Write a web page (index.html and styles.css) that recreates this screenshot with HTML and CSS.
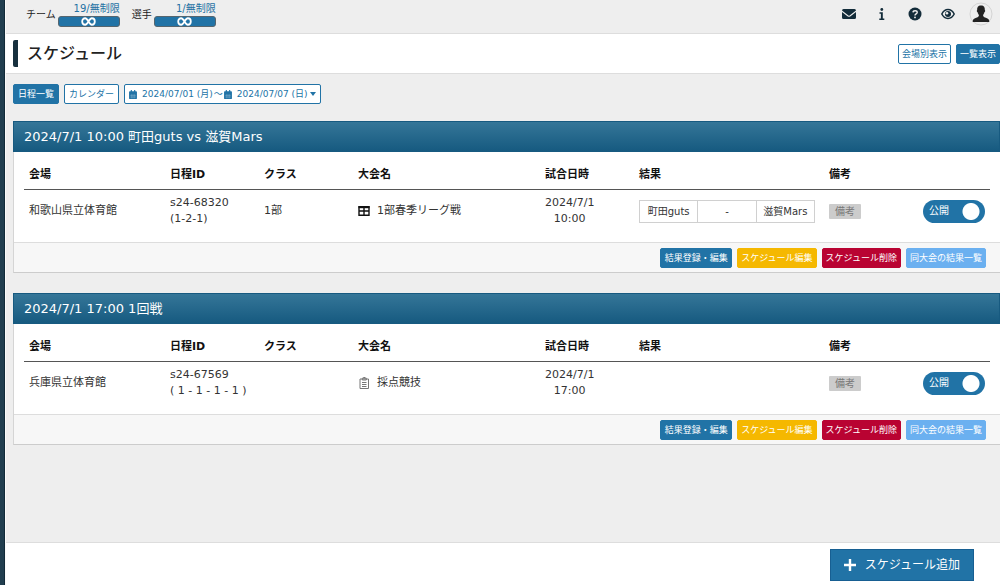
FILE: index.html
```html
<!DOCTYPE html>
<html lang="ja">
<head>
<meta charset="utf-8">
<meta name="viewport" content="width=device-width, initial-scale=1">
<title>スケジュール</title>
<link rel="stylesheet" href="styles.css">
</head>
<body>
<svg class="defs" aria-hidden="true">
  <symbol id="calendar" viewBox="0 0 14 16"><path d="M0 6h14v8.500a1.500 1.500 0 0 1-1.500 1.500h-11A1.500 1.500 0 0 1 0 14.500zM0 6.500V3.500A1.500 1.500 0 0 1 1.500 2H3V0h2v2h4V0h2v2h1.500A1.500 1.500 0 0 1 14 3.500V6.500z"/><path class="cal-grid" d="M2 9.500h10M2 12.500h10M5 7v8M9 7v8"/></symbol>
  <symbol id="infinity" viewBox="0 0 16 10"><path d="M8 5C6.600 2.600 5.700 1.400 4.300 1.400a3.300 3.600 0 0 0 0 7.200C5.700 8.600 6.600 7.400 8 5s2.300-3.600 3.700-3.600a3.300 3.600 0 0 1 0 7.200C10.300 8.600 9.400 7.400 8 5z" fill="none" stroke="#fff" stroke-width="2"/></symbol>
</svg>
<div class="app">
  <aside class="rail"></aside>
  <div class="page">
    <header class="topbar">
      <div class="quotas">
        <div class="quota"><span class="quota-name">チーム</span><div class="quota-meter"><a href="#">19/無制限</a><span class="meter"><svg><use href="#infinity"/></svg></span></div></div>
        <div class="quota"><span class="quota-name">選手</span><div class="quota-meter"><a href="#">1/無制限</a><span class="meter"><svg><use href="#infinity"/></svg></span></div></div>
      </div>
      <nav class="tools">
        <button type="button" aria-label="メール"><svg viewBox="0 0 14 14"><path d="M1.500 2h11A1.500 1.500 0 0 1 14 3.500L7.600 8.400a1 1 0 0 1-1.200 0L0 3.500A1.500 1.500 0 0 1 1.500 2zM0 5l5.800 4.400a2 2 0 0 0 2.400 0L14 5v5.500A1.500 1.500 0 0 1 12.500 12h-11A1.500 1.500 0 0 1 0 10.500z"/></svg></button>
        <button type="button" aria-label="お知らせ"><svg viewBox="0 0 14 14"><circle cx="6.800" cy="2.500" r="1.400"/><path d="M4.500 5.300h3.300v6.200h1.500V13H4.300v-1.500h1.600V6.700H4.500z"/></svg></button>
        <button type="button" aria-label="ヘルプ"><svg viewBox="0 0 14 14"><circle cx="7" cy="7" r="6.500"/><path d="M5 5.400c.1-2.200 4.200-2.200 4.200 0C9.200 6.900 7 6.800 7 8.400" fill="none" stroke="#eee" stroke-width="1.400"/><circle cx="7" cy="10.400" r=".9" fill="#eee"/></svg></button>
        <button type="button" aria-label="表示"><svg viewBox="0 0 14 14"><path d="M.8 7C3.800 1 10.200 1 13.200 7 10.200 13 3.800 13 .8 7z" fill="none" stroke="currentColor" stroke-width="1.500"/><circle cx="7" cy="7" r="3"/><circle cx="6" cy="6.200" r="1.300" fill="#eee"/></svg></button>
        <button type="button" aria-label="アカウント" class="avatar"><svg viewBox="0 0 24 24"><circle cx="12" cy="12" r="11" fill="#eee" stroke="#d4d4d4"/><path fill="#222" d="M12 3.500c3 0 4 2 3.800 4.500.7.300.4 2-.4 2.300-.3 1.400-.9 2-1.300 2.700 0 1.500.3 1.900 2.700 2.700 2.600.8 3.500 1.600 3.500 4.300H3.700c0-2.700.9-3.500 3.500-4.300 2.400-.8 2.700-1.200 2.700-2.700-.4-.7-1-1.300-1.300-2.700-.8-.3-1.100-2-.4-2.300C8 5.500 9 3.500 12 3.500z"/></svg></button>
      </nav>
    </header>
    <div class="titlebar">
      <h1>スケジュール</h1>
      <div class="views">
        <button type="button" class="btn outline">会場別表示</button>
        <button type="button" class="btn primary">一覧表示</button>
      </div>
    </div>
    <main>
      <div class="filters">
        <button type="button" class="btn primary">日程一覧</button>
        <button type="button" class="btn outline">カレンダー</button>
        <button type="button" class="btn outline range"><svg><use href="#calendar"/></svg><span>2024/07/01 (月)</span><span class="tilde">～</span><svg><use href="#calendar"/></svg><span>2024/07/07 (日)</span><i class="caret"></i></button>
      </div>
      <section class="card">
        <h2>2024/7/1 10:00 町田guts vs 滋賀Mars</h2>
        <div class="card-body">
          <table class="schedule">
            <colgroup><col class="venue"><col class="code"><col class="class"><col class="event"><col class="when"><col class="result"><col class="note"></colgroup>
            <thead><tr><th>会場</th><th>日程ID</th><th>クラス</th><th>大会名</th><th>試合日時</th><th>結果</th><th>備考</th></tr></thead>
            <tbody><tr>
              <td>和歌山県立体育館</td>
              <td>s24-68320<br>(1-2-1)</td>
              <td>1部</td>
              <td><span class="event-name"><svg viewBox="0 0 12 12"><path d="M1 1.800h10v8.400H1zM1 6h10M6 2v8" fill="none" stroke="#111" stroke-width="1.400"/><path d="M.5 1.200h11v2H.5z"/></svg>1部春季リーグ戦</span></td>
              <td><span class="datetime">2024/7/1<br>10:00</span></td>
              <td><div class="score"><span>町田guts</span><span>-</span><span>滋賀Mars</span></div></td>
              <td><div class="note-cell"><span class="badge">備考</span><label class="switch"><input type="checkbox" role="switch" checked><span>公開</span></label></div></td>
            </tr></tbody>
          </table>
        </div>
        <footer class="actions">
          <button type="button" class="btn primary">結果登録・編集</button>
          <button type="button" class="btn warning">スケジュール編集</button>
          <button type="button" class="btn danger">スケジュール削除</button>
          <button type="button" class="btn info">同大会の結果一覧</button>
        </footer>
      </section>
      <section class="card">
        <h2>2024/7/1 17:00 1回戦</h2>
        <div class="card-body">
          <table class="schedule">
            <colgroup><col class="venue"><col class="code"><col class="class"><col class="event"><col class="when"><col class="result"><col class="note"></colgroup>
            <thead><tr><th>会場</th><th>日程ID</th><th>クラス</th><th>大会名</th><th>試合日時</th><th>結果</th><th>備考</th></tr></thead>
            <tbody><tr>
              <td>兵庫県立体育館</td>
              <td>s24-67569<br>( 1 - 1 - 1 - 1 )</td>
              <td></td>
              <td><span class="event-name"><svg viewBox="0 0 12 12"><path d="M2 2h8.500v9.500H2zM4.300 1.200h4v1.800h-4zM4 5.500h4.500M4 7.500h4.500M4 9.500h4.500" fill="none" stroke="#777"/><path d="M5.300 0h2v1h-2z" fill="#777"/></svg>採点競技</span></td>
              <td><span class="datetime">2024/7/1<br>17:00</span></td>
              <td></td>
              <td><div class="note-cell"><span class="badge">備考</span><label class="switch"><input type="checkbox" role="switch" checked><span>公開</span></label></div></td>
            </tr></tbody>
          </table>
        </div>
        <footer class="actions">
          <button type="button" class="btn primary">結果登録・編集</button>
          <button type="button" class="btn warning">スケジュール編集</button>
          <button type="button" class="btn danger">スケジュール削除</button>
          <button type="button" class="btn info">同大会の結果一覧</button>
        </footer>
      </section>
    </main>
    <footer class="bottombar">
      <button type="button" class="add"><svg viewBox="0 0 10 10"><path d="M5 0v10M0 5h10" stroke="#fff" stroke-width="2"/></svg>スケジュール追加</button>
    </footer>
  </div>
</div>
</body>
</html>
```

FILE: styles.css
```css
* { box-sizing: border-box; }
body {
  margin: 0;
  background: #eee;
  color: #333;
  font: 11px/16px "DejaVu Sans", "Noto Sans CJK JP", sans-serif;
}
button { font: inherit; color: inherit; margin: 0; padding: 0; border: 0; background: none; cursor: pointer; }
svg { display: block; flex: none; fill: currentColor; }
.defs { position: absolute; width: 0; height: 0; }

.app { display: flex; min-height: 100vh; }
.rail { flex: none; width: 6px; background: #213e4f; border-right: 1px solid #fafafa; box-shadow: inset -1px 0 #122a38; }
.page { flex: 1; min-width: 0; display: flex; flex-direction: column; }

.topbar {
  display: flex; justify-content: space-between; align-items: center;
  height: 34px; padding: 0 7px 0 20px;
  border-bottom: 1px solid #ddd;
  font-size: 10px;
}
.quotas { display: flex; gap: 12px; padding-bottom: 4px; }
.quota { display: flex; align-items: center; gap: 2px; color: #222; }
.quota-meter { display: flex; flex-direction: column; width: 62px; }
.quota-meter a { color: #2471a3; text-align: right; text-decoration: none; line-height: 14px; }
.meter { display: flex; justify-content: center; align-items: center; height: 11px; background: #2173a6; border: 1px solid #56656e; border-radius: 3px; }
.meter svg { width: 15px; height: 9px; }
.tools { display: flex; align-items: center; gap: 19px; padding-bottom: 6px; color: #132c3a; }
.tools svg { width: 14px; height: 14px; }
.tools .avatar { margin-left: -5px; }
.tools .avatar svg { width: 24px; height: 24px; }

.titlebar {
  display: flex; justify-content: space-between; align-items: center;
  height: 40px; padding-left: 7px;
  background: #fff; border-bottom: 1px solid #ddd;
}
h1 { margin: 0; padding-left: 9px; border-left: 5px solid #17303e; border-radius: 2px; color: #222; font-size: 16px; line-height: 27px; font-weight: 500; }
.views { display: flex; gap: 5px; }

.btn { height: 20px; padding: 0 4px; border: 1px solid #2173a6; border-radius: 2px; font-size: 9px; line-height: 16px; white-space: nowrap; }
.btn.outline { background: #fff; color: #2173a6; }
.btn.primary { background: #2173a6; color: #fff; }
.btn.warning { background: #f5b800; border-color: #f5b800; color: #fff; }
.btn.danger { background: #b90332; border-color: #b90332; color: #fff; }
.btn.info { background: #6bb0f0; border-color: #6bb0f0; color: #fff; }
.views .btn { padding: 0 3px; }

main { flex: 1; padding: 10px 0 20px 7px; }
.filters { display: flex; gap: 5px; }
.btn.range { display: flex; align-items: center; padding: 0 4px; }
.range svg { width: 8px; height: 9px; margin-right: 5px; }
.tilde { margin: 0 1px; }
.cal-grid { fill: none; stroke: #fff; stroke-width: 1; opacity: .4; }
.caret { margin-left: 2px; border: 3px solid transparent; border-top: 4px solid #2173a6; border-bottom: 0; }

.card { margin-top: 17px; border-left: 1px solid #d5d5d5; border-bottom: 1px solid #ccc; background: #fff; }
.card + .card { margin-top: 20px; }
h2 {
  margin: 0 0 0 -1px; padding: 0 10px;
  border: 1px solid #175a80;
  background: linear-gradient(#357698, #165a80);
  color: #fff; font-size: 13px; line-height: 29px; font-weight: 400;
}
.card-body { padding: 10px 10px 9px; }
.schedule { width: 100%; table-layout: fixed; border-collapse: collapse; }
.schedule th { height: 27px; padding: 0 5px; border-bottom: 1px solid #555; color: #111; text-align: left; font-weight: 700; }
.schedule td { height: 44px; padding: 0 5px; vertical-align: middle; }
.venue { width: 141px; }
.code, .class, .when { width: 94px; }
.event { width: 187px; }
.result { width: 190px; }
.event-name { display: flex; align-items: center; gap: 7px; }
.event-name svg { width: 12px; height: 12px; color: #111; }
.datetime { display: inline-block; text-align: center; }
.score { display: flex; width: 176px; border: 1px solid #d0d0d0; font-size: 10px; line-height: 21px; text-align: center; }
.score span { flex: 1; white-space: nowrap; }
.score span + span { border-left: 1px solid #d0d0d0; }
.note-cell { display: flex; align-items: center; justify-content: space-between; }
.badge { padding: 0 6px; border-radius: 1px; background: #ccc; color: #777; font-size: 10px; line-height: 15px; }
.switch { position: relative; display: block; color: #fff; font-size: 10px; }
.switch input {
  appearance: none; display: block; width: 62px; height: 23px; margin: 0;
  border-radius: 12px;
  background: radial-gradient(circle at 48px 50%, #fff 8px, transparent 9px) #2173a6;
}
.switch span { position: absolute; left: 6px; top: 3px; }
.actions { display: flex; justify-content: flex-end; gap: 5px; padding: 5px 14px 4px; border-top: 1px solid #ddd; background: #f7f7f7; }
.actions .btn { min-width: 72px; padding: 0 3px; }

.bottombar { display: flex; justify-content: flex-end; padding: 6px 26px 4px; border-top: 1px solid #ddd; background: #fff; }
.add { display: flex; align-items: center; gap: 9px; height: 32px; padding: 0 13px; border: 1px solid #175f92; background: #2173a6; color: #fff; font-size: 12px; }
.add svg { width: 12px; height: 12px; }
```
